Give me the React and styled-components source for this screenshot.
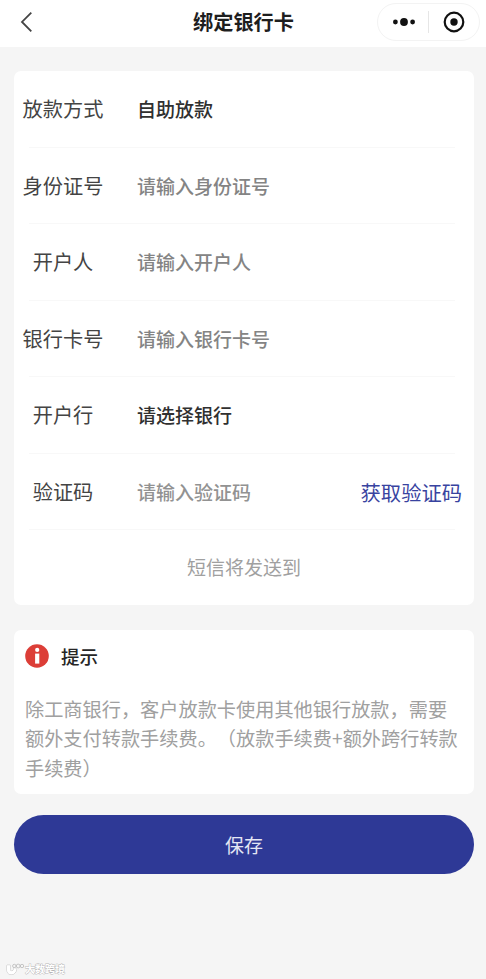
import React from "react";
import styled, { createGlobalStyle } from "styled-components";

const fields = [
  { label: "放款方式", value: "自助放款", color: "#303030" },
  { label: "身份证号", value: "请输入身份证号", color: "#848484" },
  { label: "开户人", value: "请输入开户人", color: "#848484" },
  { label: "银行卡号", value: "请输入银行卡号", color: "#848484" },
  { label: "开户行", value: "请选择银行", color: "#303030" },
  { label: "验证码", value: "请输入验证码", color: "#929292", action: "获取验证码" },
];

const App = () => {
  return (
    <Page>
      <GlobalStyle />
      <Header>
        <BackButton aria-label="返回">
          <svg width="14" height="22" viewBox="0 0 14 22" fill="none">
            <path d="M12.3 1.6 3 10.9l9.3 9.4" stroke="#444" strokeWidth="1.8" />
          </svg>
        </BackButton>
        <Title>绑定银行卡</Title>
        <Capsule>
          <svg width="24" height="10" viewBox="0 0 24 10" fill="#111">
            <circle cx="3.4" cy="5" r="2.4" />
            <circle cx="12" cy="5" r="3.9" />
            <circle cx="20.6" cy="5" r="2.4" />
          </svg>
          <CapsuleLine />
          <svg width="22" height="22" viewBox="0 0 22 22">
            <circle cx="11" cy="11" r="9.3" fill="none" stroke="#111" strokeWidth="2.2" />
            <circle cx="11" cy="11" r="3.7" fill="#111" />
          </svg>
        </Capsule>
      </Header>

      <Content>
        <Card>
          {fields.map((field) => (
            <Row key={field.label}>
              <Label>{field.label}</Label>
              <Value $color={field.color}>{field.value}</Value>
              {field.action ? <CodeButton>{field.action}</CodeButton> : null}
            </Row>
          ))}
          <SmsHint>短信将发送到</SmsHint>
        </Card>

        <Notice>
          <NoticeHead>
            <svg width="24" height="24" viewBox="0 0 24 24">
              <circle cx="12" cy="12" r="11.8" fill="#dc3e37" />
              <circle cx="12.2" cy="5.9" r="2.1" fill="#fff" />
              <path d="M10.1 9.6h4.2v10h-4.2z" fill="#fff" />
            </svg>
            提示
          </NoticeHead>
          <NoticeText>
            除工商银行，客户放款卡使用其他银行放款，需要
            <br />
            额外支付转款手续费。（放款手续费+额外跨行转款
            <br />
            手续费）
          </NoticeText>
        </Notice>

        <SaveButton>保存</SaveButton>
      </Content>

      <Watermark>
        <svg width="19" height="13" viewBox="0 0 19 13" fill="none" stroke="#b9b9b9" strokeWidth="0.8">
          <path d="M1 2.2h3.2v4.6c0 1.8 2.8 1.8 3.4 0l.7-2 2.4 1.2c-.6 3.5-2.5 5.6-5.6 5.6C2.5 11.6 1 9.8 1 7.3z" fill="#fff" />
          <circle cx="8.3" cy="3" r="1.7" />
          <circle cx="12.2" cy="3" r="1.9" />
          <circle cx="16" cy="3" r="1.7" />
        </svg>
        大数跨境
      </Watermark>
    </Page>
  );
};

const GlobalStyle = createGlobalStyle`
  * {
    box-sizing: border-box;
  }
  body {
    margin: 0;
    background: #f5f5f5;
  }
`;

const Page = styled.div`
  display: flex;
  flex-direction: column;
  height: 979px;
  background: #f5f5f5;
  font-family: "Noto Sans CJK SC", sans-serif;
  text-spacing-trim: space-all;
  white-space: nowrap;
  overflow: hidden;
`;

const Header = styled.header`
  display: grid;
  grid-template-columns: 1fr auto 1fr;
  align-items: center;
  height: 47px;
  padding: 0 6px 3px 19px;
  background: #fff;
`;

const BackButton = styled.button`
  display: flex;
  justify-self: start;
  padding: 0;
  border: none;
  background: none;
`;

const Title = styled.h1`
  margin: 0 0 0 -12px;
  font-size: 20.2px;
  line-height: 30px;
  font-weight: 700;
  color: #1e1e1e;
`;

const Capsule = styled.div`
  display: flex;
  align-items: center;
  justify-self: end;
  width: 103px;
  height: 38px;
  padding-left: 14px;
  border: 1px solid #f3f3f3;
  border-radius: 19px;
`;

const CapsuleLine = styled.div`
  width: 1px;
  height: 22px;
  margin: 0 14px 0 12px;
  background: #e6e6e6;
`;

const Content = styled.main`
  display: flex;
  flex-direction: column;
  padding: 24px 12px 0 14px;
`;

const Card = styled.section`
  height: 534px;
  background: #fff;
  border-radius: 7px;
`;

const Row = styled.div`
  display: grid;
  grid-template-columns: 98px 1fr auto;
  align-items: center;
  height: 76.5px;
  padding-right: 12px;
  background: linear-gradient(#f8f8f8, #f8f8f8) 15px 100% / 426px 1px no-repeat;
`;

const Label = styled.span`
  text-align: center;
  font-size: 20.2px;
  line-height: 30px;
  color: #444;
`;

const Value = styled.span`
  padding-left: 25px;
  font-size: 19px;
  line-height: 30px;
  font-weight: 500;
  color: ${(props) => props.$color};
`;

const CodeButton = styled.button`
  padding: 1px 0 0;
  border: none;
  background: none;
  font-family: inherit;
  font-size: 20.3px;
  line-height: 30px;
  color: #3843a0;
`;

const SmsHint = styled.div`
  padding-top: 22px;
  text-align: center;
  font-size: 19px;
  line-height: 30px;
  color: #a0a0a0;
`;

const Notice = styled.section`
  height: 164px;
  margin-top: 25px;
  padding: 11px 11px 0;
  background: #fff;
  border-radius: 7px;
`;

const NoticeHead = styled.div`
  display: flex;
  align-items: center;
  gap: 12px;
  height: 30px;
  font-size: 18.5px;
  line-height: 28px;
  font-weight: 500;
  color: #262626;
`;

const NoticeText = styled.p`
  margin: 24px 0 0;
  font-size: 19.2px;
  line-height: 29.3px;
  color: #a0a0a0;
`;

const SaveButton = styled.button`
  height: 59px;
  margin-top: 21px;
  padding: 0;
  border: none;
  border-radius: 30px;
  background: #2e3996;
  font-family: inherit;
  font-size: 19px;
  color: #e4e6f4;
`;

const Watermark = styled.footer`
  display: flex;
  align-items: center;
  margin-top: auto;
  padding: 0 0 3px 6px;
  font-size: 10px;
  line-height: 14px;
  font-weight: 700;
  color: #fff;
  -webkit-text-stroke: 0.8px #b5b5b5;
  paint-order: stroke;
`;

export default App;
